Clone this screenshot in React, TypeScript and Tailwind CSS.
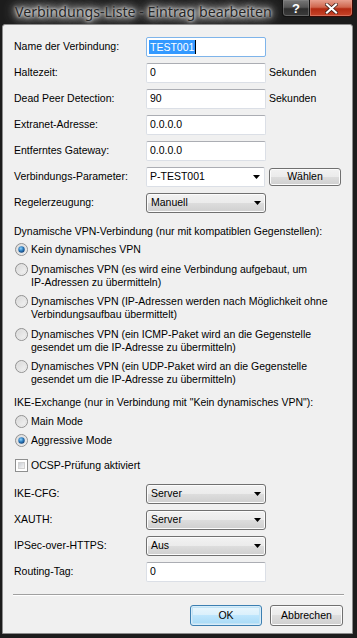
import React from 'react';

const Arrow = () => (
  <svg width="7" height="4" viewBox="0 0 7 4" className="shrink-0">
    <polygon points="0,0 7,0 3.5,4" fill="#000" />
  </svg>
);

const TextBox: React.FC<{ value: string; focused?: boolean; selected?: boolean }> = ({
  value,
  focused,
  selected,
}) => (
  <div
    className={
      focused
        ? 'w-[120px] h-[20px] bg-white border border-[#7eb4ea] rounded-[2px] flex items-center pl-[2px]'
        : 'w-[120px] h-[20px] bg-white border border-[#dbdfe6] border-t-[#abadb3] rounded-[2px] flex items-center pl-[3px]'
    }
  >
    {selected ? (
      <>
        <span className="bg-[#3399ff] text-white leading-[14px] px-[1px]">{value}</span>
        <span className="w-[1px] h-[14px] bg-black" />
      </>
    ) : (
      <span>{value}</span>
    )}
  </div>
);

const EditCombo: React.FC<{ value: string }> = ({ value }) => (
  <div className="w-[120px] h-[20px] bg-white border border-[#dbdfe6] border-t-[#abadb3] rounded-[2px] flex items-center justify-between pl-[3px] pr-[4px]">
    <span>{value}</span>
    <Arrow />
  </div>
);

const Combo: React.FC<{ value: string }> = ({ value }) => (
  <div className="w-[120px] h-[20px] rounded-[3px] border border-[#707070] bg-[linear-gradient(#f2f2f2_0%,#ebebeb_50%,#dddddd_50%,#cfcfcf_100%)] shadow-[inset_0_0_0_1px_#fcfcfc] flex items-center justify-between pl-[4px] pr-[4px]">
    <span>{value}</span>
    <Arrow />
  </div>
);

const Button: React.FC<{ label: string; isDefault?: boolean; w: string; h: string }> = ({
  label,
  isDefault,
  w,
  h,
}) => (
  <div
    className={
      isDefault
        ? `${w} ${h} rounded-[3px] border border-[#3c7fb1] bg-[linear-gradient(#eaf6fd_0%,#d9f0fc_50%,#bee6fd_50%,#a7d9f5_100%)] shadow-[inset_0_0_0_1px_#d8ecf9,inset_0_0_0_2px_#c2e4f6] flex items-center justify-center`
        : `${w} ${h} rounded-[3px] border border-[#707070] bg-[linear-gradient(#f2f2f2_0%,#ebebeb_50%,#dddddd_50%,#cfcfcf_100%)] shadow-[inset_0_0_0_1px_#fcfcfc] flex items-center justify-center`
    }
  >
    {label}
  </div>
);

const Radio: React.FC<{ checked?: boolean }> = ({ checked }) => (
  <svg width="13" height="13" viewBox="0 0 13 13" className="shrink-0">
    <defs>
      <linearGradient id="rbg" x1="0" y1="0" x2="1" y2="1">
        <stop offset="0" stopColor="#d4d4d4" />
        <stop offset="1" stopColor="#f8f8f8" />
      </linearGradient>
      <radialGradient id="rdot" cx="0.4" cy="0.35" r="0.7">
        <stop offset="0" stopColor="#8ed2fb" />
        <stop offset="0.5" stopColor="#2f7fc1" />
        <stop offset="1" stopColor="#0f3b71" />
      </radialGradient>
    </defs>
    <circle cx="6.5" cy="6.5" r="6" fill="url(#rbg)" stroke="#929292" />
    <circle cx="6.5" cy="6.5" r="4.5" fill="none" stroke="#e4e4e4" strokeWidth="1" />
    {checked && <circle cx="6.5" cy="6.5" r="3.2" fill="url(#rdot)" />}
  </svg>
);

const RadioItem: React.FC<{ checked?: boolean; children: React.ReactNode }> = ({
  checked,
  children,
}) => (
  <div className="flex items-start">
    <div className="ml-[1px] w-[16px] h-[13px] flex items-center">
      <Radio checked={checked} />
    </div>
    <div className="leading-[13px] whitespace-nowrap">{children}</div>
  </div>
);

const Row: React.FC<{ label: string; children: React.ReactNode }> = ({ label, children }) => (
  <div className="flex items-center h-[20px]">
    <div className="w-[132px] shrink-0">{label}</div>
    {children}
  </div>
);

export default function App() {
  return (
    <div className="w-[357px] h-[638px] bg-[#1c1c1c] flex flex-col overflow-hidden font-['Liberation_Sans',Arial,sans-serif] text-[10.5px] text-black">
      <div className="h-[24px] shrink-0 flex items-start">
        <div className="pl-[15px] pt-[1px] text-[14.2px] leading-[21px] text-[#262626] font-['Noto_Sans',sans-serif] whitespace-nowrap [text-shadow:0_0_3px_#fff,0_0_6px_#eee,0_0_10px_#d8d8d8,0_0_14px_#c4c4c4,0_0_18px_#a8a8a8]">
          Verbindungs-Liste - Eintrag bearbeiten
        </div>
        <div className="ml-auto mr-[4px] flex">
          <div className="w-[28px] h-[17px] rounded-bl-[4px] border border-[#111] border-t-0 bg-[linear-gradient(#777_0%,#555_45%,#2e2e2e_55%,#3c3c3c_100%)] shadow-[inset_0_0_0_1px_#8a8a8a80] flex items-center justify-center text-white font-bold text-[13px] leading-none font-['Liberation_Sans',sans-serif]">
            ?
          </div>
          <div className="w-[43px] h-[17px] rounded-br-[4px] border border-[#3a0a05] border-t-0 border-l-0 bg-[linear-gradient(#e5a08f_0%,#d0664e_45%,#b32a12_55%,#c8452a_100%)] shadow-[inset_0_0_0_1px_#eb9a8a80] flex items-center justify-center">
            <svg width="13" height="11" viewBox="0 0 13 11">
              <path d="M2 1.5 L11 9.5 M11 1.5 L2 9.5" stroke="#3a1a14" strokeWidth="3.6" strokeLinecap="square" />
              <path d="M2 1.5 L11 9.5 M11 1.5 L2 9.5" stroke="#ffffff" strokeWidth="2.2" strokeLinecap="square" />
            </svg>
          </div>
        </div>
      </div>

      <div className="ml-[2px] mr-[4px] mb-[4px] flex-1 rounded-t-[3px] border border-[#8c8c8c] bg-[#f0f0f0] px-[11px] pt-[12px] flex flex-col">
        <div className="flex flex-col gap-[6px]">
          <Row label="Name der Verbindung:">
            <TextBox value="TEST001" focused selected />
          </Row>
          <Row label="Haltezeit:">
            <TextBox value="0" />
            <span className="ml-[3px]">Sekunden</span>
          </Row>
          <Row label="Dead Peer Detection:">
            <TextBox value="90" />
            <span className="ml-[3px]">Sekunden</span>
          </Row>
          <Row label="Extranet-Adresse:">
            <TextBox value="0.0.0.0" />
          </Row>
          <Row label="Entferntes Gateway:">
            <TextBox value="0.0.0.0" />
          </Row>
          <Row label="Verbindungs-Parameter:">
            <EditCombo value="P-TEST001" />
            <div className="ml-[4px]">
              <Button label="Wählen" w="w-[72px]" h="h-[18px]" />
            </div>
          </Row>
          <Row label="Regelerzeugung:">
            <Combo value="Manuell" />
          </Row>
        </div>

        <div className="mt-[12px] leading-[13px] whitespace-nowrap">
          Dynamische VPN-Verbindung (nur mit kompatiblen Gegenstellen):
        </div>
        <div className="mt-[5px] flex flex-col gap-[6.5px]">
          <RadioItem checked>Kein dynamisches VPN</RadioItem>
          <RadioItem>
            Dynamisches VPN (es wird eine Verbindung aufgebaut, um
            <br />
            IP-Adressen zu übermitteln)
          </RadioItem>
          <RadioItem>
            Dynamisches VPN (IP-Adressen werden nach Möglichkeit ohne
            <br />
            Verbindungsaufbau übermittelt)
          </RadioItem>
          <RadioItem>
            Dynamisches VPN (ein ICMP-Paket wird an die Gegenstelle
            <br />
            gesendet um die IP-Adresse zu übermitteln)
          </RadioItem>
          <RadioItem>
            Dynamisches VPN (ein UDP-Paket wird an die Gegenstelle
            <br />
            gesendet um die IP-Adresse zu übermitteln)
          </RadioItem>
        </div>

        <div className="mt-[10px] leading-[13px] whitespace-nowrap">
          IKE-Exchange (nur in Verbindung mit "Kein dynamisches VPN"):
        </div>
        <div className="mt-[6px] flex flex-col gap-[6px]">
          <RadioItem>Main Mode</RadioItem>
          <RadioItem checked>Aggressive Mode</RadioItem>
        </div>

        <div className="mt-[12px] flex items-center leading-[13px]">
          <div className="ml-[1px] w-[16px] h-[13px] flex items-center">
            <div className="w-[13px] h-[13px] border border-[#8e8f8f] bg-white p-[2px]">
              <div className="w-full h-full border border-[#d2d2d2] bg-[linear-gradient(135deg,#cbcfd5,#f6f6f6)]" />
            </div>
          </div>
          <span>OCSP-Prüfung aktiviert</span>
        </div>

        <div className="mt-[12px] flex flex-col gap-[6px]">
          <Row label="IKE-CFG:">
            <Combo value="Server" />
          </Row>
          <Row label="XAUTH:">
            <Combo value="Server" />
          </Row>
          <Row label="IPSec-over-HTTPS:">
            <Combo value="Aus" />
          </Row>
          <Row label="Routing-Tag:">
            <TextBox value="0" />
          </Row>
        </div>

        <div className="mt-[12px] -ml-[1px] w-[331px] h-[2px] border-t border-[#a0a0a0] border-b border-b-white" />

        <div className="mt-[9px] -mr-[2px] flex justify-end gap-[8px]">
          <Button label="OK" isDefault w="w-[72px]" h="h-[21px]" />
          <Button label="Abbrechen" w="w-[73px]" h="h-[21px]" />
        </div>
      </div>
    </div>
  );
}
